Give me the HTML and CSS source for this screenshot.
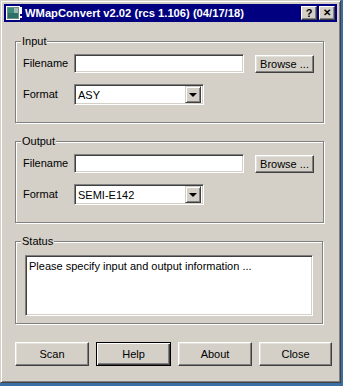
FILE: index.html
```html
<!DOCTYPE html>
<html lang="en">

<head>
    <meta charset="utf-8">
    <title>WMapConvert</title>
    <link rel="stylesheet" href="styles.css">
</head>

<body>

    <div class="window">
        <div class="titlebar">
            <svg class="appicon" width="16" height="14" viewBox="0 0 16 14">
                <rect x="0" y="0" width="14" height="14" fill="#fff"/>
                <rect x="1" y="1" width="12" height="12" fill="#6f8f86"/>
                <rect x="2" y="2" width="10" height="10" fill="#3c8a7c"/>
                <rect x="2" y="7" width="10" height="5" fill="#2d6f66"/>
                <rect x="8" y="2" width="4" height="5" fill="#9fb8b2"/>
                <rect x="14" y="1" width="2" height="7" fill="#fff"/>
                <rect x="14" y="10" width="2" height="2" fill="#fff"/>
            </svg>
            <span class="title">WMapConvert v2.02 (rcs 1.106) (04/17/18)</span>
            <div class="capbtn">?</div>
            <div class="capbtn close">&#x2715;</div>
        </div>

        <div class="content">
            <fieldset>
                <legend>Input</legend>
                <div class="rows">
                    <label>Filename</label>
                    <input type="text" class="field">
                    <button class="btn browse">Browse ...</button>
                    <label>Format</label>
                    <div class="combo"><span>ASY</span><i class="arrow"></i></div>
                </div>
            </fieldset>

            <fieldset>
                <legend>Output</legend>
                <div class="rows">
                    <label>Filename</label>
                    <input type="text" class="field">
                    <button class="btn browse">Browse ...</button>
                    <label>Format</label>
                    <div class="combo"><span>SEMI-E142</span><i class="arrow"></i></div>
                </div>
            </fieldset>

            <fieldset class="status">
                <legend>Status</legend>
                <div class="log">Please specify input and output information ...</div>
            </fieldset>

            <div class="actions">
                <button class="btn">Scan</button>
                <button class="btn default">Help</button>
                <button class="btn">About</button>
                <button class="btn">Close</button>
            </div>
        </div>
    </div>

</body></html>
```

FILE: styles.css
```css
body {
    margin: 0;
    background-color: #3a6ea5;
    font-family: "Liberation Sans", Arial, sans-serif;
    font-size: 11px;
    color: #000;
}

.window {
    width: 341px;
    height: 383px;
    box-sizing: border-box;
    background-color: #d4d0c8;
    border: 1px solid;
    border-color: #d4d0c8 #404040 #404040 #d4d0c8;
    box-shadow: inset 1px 1px #fff, inset -1px -1px #808080;
    padding: 3px;
}

.titlebar {
    height: 18px;
    background-color: #000080;
    color: #fff;
    display: flex;
    align-items: center;
    padding: 0 2px;
}

.appicon {
    margin-right: 3px;
}

.title {
    flex: 1;
    font-weight: bold;
    font-size: 11.2px;
    white-space: nowrap;
}

.capbtn {
    width: 16px;
    height: 14px;
    box-sizing: border-box;
    background-color: #d4d0c8;
    color: #000;
    border: 1px solid;
    border-color: #fff #404040 #404040 #fff;
    box-shadow: inset -1px -1px #808080;
    font-weight: bold;
    font-size: 11px;
    line-height: 12px;
    text-align: center;
}

.close {
    margin-left: 2px;
    font-size: 10px;
}

.content {
    padding: 13px 6px 0 11px;
}

fieldset {
    margin: 0 0 12px 0;
    padding: 6px 9px 17px 7px;
    width: 308px;
    box-sizing: border-box;
    border: 1px solid #808080;
    box-shadow: 1px 1px #fff, inset 1px 1px #fff;
}

legend {
    padding: 0 1px;
    margin-left: -2px;
    line-height: 13px;
    background-color: #d4d0c8;
}

.rows {
    display: grid;
    grid-template-columns: 40px 170px 59px;
    column-gap: 11px;
    row-gap: 11px;
    align-items: center;
}

label {
    line-height: 13px;
    white-space: nowrap;
}

.field {
    margin: 0;
    height: 19px;
    box-sizing: border-box;
    border: 1px solid;
    border-color: #808080 #fff #fff #808080;
    box-shadow: inset 1px 1px #404040, inset -1px -1px #d4d0c8;
    background-color: #fff;
}

.btn {
    margin: 0;
    padding: 0;
    font-family: inherit;
    font-size: 11px;
    color: #000;
    background-color: #d4d0c8;
    border: 1px solid;
    border-color: #fff #404040 #404040 #fff;
    box-shadow: inset -1px -1px #808080, inset 1px 1px #e4e2dc;
    box-sizing: border-box;
}

.browse {
    height: 18px;
}

.combo {
    grid-column: 2;
    width: 130px;
    height: 21px;
    box-sizing: border-box;
    border: 1px solid;
    border-color: #808080 #fff #fff #808080;
    box-shadow: inset 1px 1px #404040, inset -1px -1px #d4d0c8;
    background-color: #fff;
    display: flex;
    align-items: center;
    padding: 2px 2px 2px 3px;
}

.combo span {
    flex: 1;
}

.arrow {
    width: 16px;
    height: 17px;
    box-sizing: border-box;
    background-color: #d4d0c8;
    border: 1px solid;
    border-color: #d4d0c8 #404040 #404040 #d4d0c8;
    box-shadow: inset 1px 1px #fff, inset -1px -1px #808080;
    display: flex;
    align-items: center;
    justify-content: center;
}

.arrow::after {
    content: "";
    border-left: 4px solid transparent;
    border-right: 4px solid transparent;
    border-top: 4px solid #000;
}

.status {
    padding: 7px 9px 7px 9px;
}

.status legend {
    margin-left: -4px;
}

.log {
    height: 61px;
    box-sizing: border-box;
    border: 1px solid;
    border-color: #808080 #fff #fff #808080;
    box-shadow: inset 1px 1px #404040, inset -1px -1px #d4d0c8;
    background-color: #fff;
    padding: 4px 3px;
}

.actions {
    margin-top: 18px;
    display: grid;
    grid-template-columns: 74px 75px 74px 73px;
    column-gap: 7px;
    width: 318px;
}

.actions .btn {
    height: 24px;
}

.default {
    border-color: #000;
    box-shadow: inset 1px 1px #fff, inset -1px -1px #404040, inset -2px -2px #808080;
}
```
